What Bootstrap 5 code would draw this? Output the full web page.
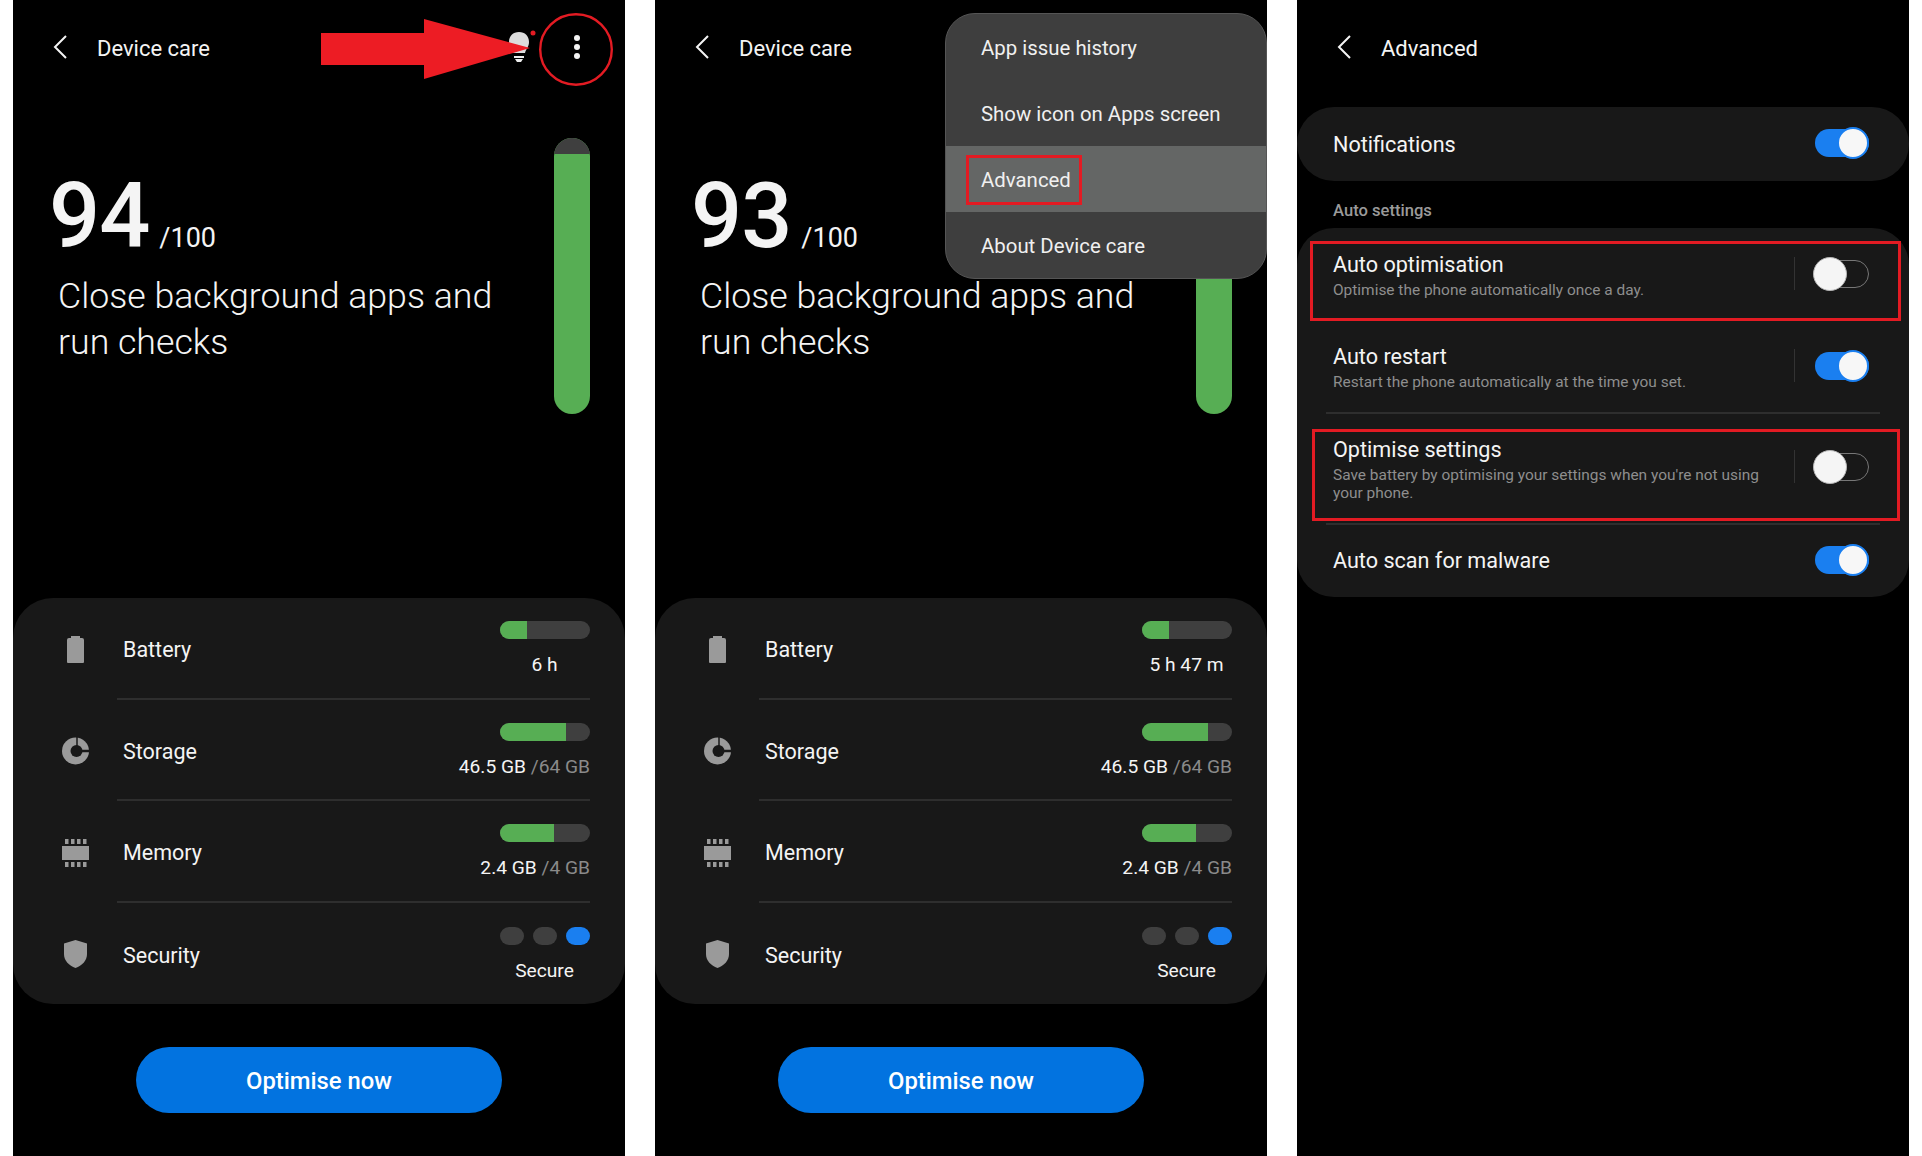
<!DOCTYPE html>
<html>
<head>
  <title>Device care</title>
  <link href="https://cdn.jsdelivr.net/npm/bootstrap@5.3.7/dist/css/bootstrap.min.css" rel="stylesheet" />
  <style>
    html, body { height: 1156px; overflow: hidden; }
    body { background: #fff; font-family: Roboto, "Liberation Sans", sans-serif; color: #f4f4f4; padding-left: 13px; }
    .phone { width: 612px; height: 1156px; background: #000; flex: none; }
    .next-phone { margin-left: 30px; }
    .top-bar { height: 94px; padding-left: 40px; }
    .top-title { font-size: 22px; margin-left: 30px; padding-top: 2px; }
    .bulb-icon { position: absolute; left: 495px; top: 29px; }
    .more-icon { position: absolute; left: 557px; top: 33px; }
    .hero { height: 504px; }
    .score { padding: 78px 0 0 36px; }
    .score-num { font-size: 90px; font-weight: 500; line-height: 90px; letter-spacing: -1px; }
    .score-max { font-size: 27px; margin-left: 10px; }
    .hero-text { font-size: 35.7px; font-weight: 300; line-height: 46px; margin: 11px 0 0 45px; max-width: 450px; }
    .level { width: 36px; height: 276px; margin: 44px 35px 0 0; background: #57ae54; border-radius: 18px; overflow: hidden; }
    .level-top { height: 16px; background: #3f3f3f; }
    .care-panel { height: 406px; background: #181818; border-radius: 40px; }
    .care-row { height: 25%; }
    .care-icon { width: 27px; margin: 2px 28px 0 49px; flex: none; }
    .care-body { padding-left: 6px; margin-right: 35px; border-bottom: 2px solid #2e2e2e; }
    .care-row:last-child .care-body { border-bottom: 0; }
    .care-label { font-size: 21.5px; padding-top: 5px; }
    .care-side { padding-top: 3px; }
    .care-val { font-size: 19.2px; line-height: 24px; margin-top: 14px; }
    .care-val span { color: #8a8a8a; }
    .care-val.centered { width: 91px; text-align: center; }
    .meter { width: 90px; height: 18px; background: #3f3f3f; border-radius: 9px; overflow: hidden; }
    .meter div { height: 100%; background: #57ae54; }
    .pip { width: 24px; height: 18px; background: #3f3f3f; border-radius: 9px; }
    .pip.on { background: #1a7ff0; }
    .pips { width: 90px; }
    .opt-btn { width: 366px; height: 66px; margin-top: 43px; padding-top: 9px; background: #0273e0; border: 0; color: #fff; font-size: 23.8px; font-weight: 500; }
    .opt-btn:hover { background: #0273e0; color: #fff; }
    .red-arrow { position: absolute; left: 308px; top: 19px; }
    .red-ring { position: absolute; left: 526px; top: 13px; width: 74px; height: 73px; }
    .red-box { position: absolute; border: 3px solid #e31b23; }
    .over-menu { position: absolute; left: 290px; top: 13px; width: 322px; background: #3e3e3e; border: 1px solid #555; border-radius: 30px; overflow: hidden; }
    .over-menu .list-group-item { background: transparent; border: 0; color: #f0f0f0; height: 66px; line-height: 68px; padding: 0 0 0 35px; font-size: 20.4px; }
    .over-menu .list-group-item.picked { background: #646665; }
    .set-card { background: #181818; border-radius: 37px; }
    .card-one { height: 74px; margin-top: 13px; padding: 0 40px 0 36px; }
    .card-one .set-title { padding-top: 2px; }
    .card-one .tgl { margin-bottom: 2px; }
    .set-title { font-size: 21.6px; line-height: 26px; }
    .sec-head { font-size: 16.6px; font-weight: 500; color: #9a9a9a; line-height: 20px; margin: 20px 0 7px 36px; }
    .set-row { padding: 24px 40px 21px 36px; }
    .set-row .v-sep, .set-row .tgl { margin-bottom: 4px; }
    .set-row.tall { padding-top: 23px; padding-bottom: 21px; }
    .set-row.tall .v-sep, .set-row.tall .tgl { margin-bottom: 6px; }
    .set-row.short { height: 72px; padding-top: 0; padding-bottom: 0; }
    .set-row.short .tgl { margin-bottom: 2px; }
    .set-sub { font-size: 15.45px; line-height: 18px; color: #8e8e8e; margin-top: 3px; padding-right: 20px; }
    .set-sep { height: 2px; margin: 0 29px; background: #2e2e2e; }
    .v-sep { width: 1px; height: 33px; background: #333; margin-right: 19px; flex: none; }
    .tgl { position: relative; display: block; width: 55px; height: 32px; flex: none; }
    .tgl::before { content: ""; position: absolute; left: 1px; right: 0; top: 2px; height: 28px; border-radius: 14px; background: #1a7ff0; }
    .tgl::after { content: ""; position: absolute; right: 0; top: 0; width: 32px; height: 32px; border-radius: 50%; background: #f7f7f7; border: 2px solid #1a7ff0; }
    .tgl.off::before { background: transparent; border: 1px solid #777; left: 5px; }
    .tgl.off::after { right: auto; left: -1px; top: -1px; width: 34px; height: 34px; background: #f5f5f5; border: 1px solid #b5b5b5; }
  </style>
</head>
<body class="d-flex">

  <div class="phone position-relative d-flex flex-column">
    <div class="top-bar d-flex align-items-center">
      <svg width="14" height="24" viewBox="0 0 14 24"><path d="M13 1 2 12l11 11" fill="none" stroke="#f4f4f4" stroke-width="2"/></svg>
      <div class="top-title">Device care</div>
    </div>
    <svg class="bulb-icon" width="30" height="36" viewBox="0 0 30 36"><path d="M1 13C1 7 5 3 11 3s10 4 10 10c0 5-3 7-4 11H5C4 20 1 18 1 13z" fill="#dcdcdc"/><rect x="6" y="27" width="10" height="2" fill="#eee"/><path d="M7 30h8l-2 3H9z" fill="#eee"/><circle cx="25" cy="4" r="2.500" fill="#e31b23"/></svg>
    <svg class="more-icon" width="14" height="28" viewBox="0 0 14 28"><circle cx="7" cy="5" r="3" fill="#f4f4f4"/><circle cx="7" cy="14" r="3" fill="#f4f4f4"/><circle cx="7" cy="23" r="3" fill="#f4f4f4"/></svg>
    <div class="hero d-flex justify-content-between">
      <div>
        <div class="score"><span class="score-num">94</span><span class="score-max">/100</span></div>
        <div class="hero-text">Close background apps and run checks</div>
      </div>
      <div class="level"><div class="level-top"></div></div>
    </div>
    <div class="care-panel" data-panel></div>
    <div class="text-center"><button class="btn rounded-pill opt-btn">Optimise now</button></div>
    <svg class="red-arrow" width="212" height="62" viewBox="0 0 212 62"><path d="M0 14h103V0l106 29-106 31V46H0z" fill="#ed1c24"/></svg>
    <svg class="red-ring" viewBox="0 0 74 73" preserveAspectRatio="none"><ellipse cx="37" cy="36.500" rx="35.800" ry="35.300" fill="none" stroke="#e31b23" stroke-width="2.400"/></svg>
  </div>

  <div class="phone next-phone position-relative d-flex flex-column">
    <div class="top-bar d-flex align-items-center">
      <svg width="14" height="24" viewBox="0 0 14 24"><path d="M13 1 2 12l11 11" fill="none" stroke="#f4f4f4" stroke-width="2"/></svg>
      <div class="top-title">Device care</div>
    </div>
    <div class="hero d-flex justify-content-between">
      <div>
        <div class="score"><span class="score-num">93</span><span class="score-max">/100</span></div>
        <div class="hero-text">Close background apps and run checks</div>
      </div>
      <div class="level"><div class="level-top"></div></div>
    </div>
    <div class="care-panel" data-panel></div>
    <div class="text-center"><button class="btn rounded-pill opt-btn">Optimise now</button></div>
    <div class="list-group over-menu">
      <div class="list-group-item">App issue history</div>
      <div class="list-group-item">Show icon on Apps screen</div>
      <div class="list-group-item picked">Advanced</div>
      <div class="list-group-item">About Device care</div>
    </div>
    <div class="red-box" style="left:311px;top:155px;width:116px;height:50px"></div>
  </div>

  <div class="phone next-phone position-relative d-flex flex-column">
    <div class="top-bar d-flex align-items-center">
      <svg width="14" height="24" viewBox="0 0 14 24"><path d="M13 1 2 12l11 11" fill="none" stroke="#f4f4f4" stroke-width="2"/></svg>
      <div class="top-title">Advanced</div>
    </div>
    <div class="set-card card-one d-flex align-items-center justify-content-between">
      <div class="set-title">Notifications</div>
      <span class="tgl"></span>
    </div>
    <div class="sec-head">Auto settings</div>
    <div class="set-card">
      <div class="set-row d-flex align-items-center">
        <div class="flex-grow-1">
          <div class="set-title">Auto optimisation</div>
          <div class="set-sub">Optimise the phone automatically once a day.</div>
        </div>
        <div class="v-sep"></div><span class="tgl off"></span>
      </div>
      <div class="set-row d-flex align-items-center">
        <div class="flex-grow-1">
          <div class="set-title">Auto restart</div>
          <div class="set-sub">Restart the phone automatically at the time you set.</div>
        </div>
        <div class="v-sep"></div><span class="tgl"></span>
      </div>
      <div class="set-sep"></div>
      <div class="set-row tall d-flex align-items-center">
        <div class="flex-grow-1">
          <div class="set-title">Optimise settings</div>
          <div class="set-sub">Save battery by optimising your settings when you're not using your phone.</div>
        </div>
        <div class="v-sep"></div><span class="tgl off"></span>
      </div>
      <div class="set-sep"></div>
      <div class="set-row short d-flex align-items-center justify-content-between">
        <div class="set-title">Auto scan for malware</div>
        <span class="tgl"></span>
      </div>
    </div>
    <div class="red-box" style="left:13px;top:241px;width:591px;height:80px"></div>
    <div class="red-box" style="left:15px;top:429px;width:588px;height:92px"></div>
  </div>

  <script>
    const grey = '#9a9a9a', dark = '#181818';
    const icons = {
      battery: `<svg width="27" height="28" viewBox="0 0 27 28"><path d="M9 0h9v2h2a2 2 0 0 1 2 2v22a1 1 0 0 1-1 1H6a1 1 0 0 1-1-1V4a2 2 0 0 1 2-2h2z" fill="${grey}"/></svg>`,
      storage: `<svg width="27" height="28" viewBox="0 0 27 28"><circle cx="13.5" cy="14" r="13.5" fill="${grey}"/><circle cx="14.5" cy="14" r="6" fill="${dark}"/><path d="M15 0v9" stroke="${dark}" stroke-width="1.5"/><path d="M15 14h13" stroke="${dark}" stroke-width="2.5"/></svg>`,
      memory: `<svg width="27" height="28" viewBox="0 0 27 28"><rect y="7" width="27" height="14" fill="${grey}"/><g fill="${grey}"><rect x="3" y="0" width="3.5" height="5"/><rect x="9" y="0" width="3.5" height="5"/><rect x="15" y="0" width="3.5" height="5"/><rect x="21" y="0" width="3.5" height="5"/><rect x="3" y="23" width="3.5" height="5"/><rect x="9" y="23" width="3.5" height="5"/><rect x="15" y="23" width="3.5" height="5"/><rect x="21" y="23" width="3.5" height="5"/></g></svg>`,
      shield: `<svg width="27" height="28" viewBox="0 0 27 28"><path d="M13.5 0 25 3.5V14c0 7-5 11.500-11.500 14C7 25.500 2 21 2 14V3.500z" fill="${grey}"/></svg>`
    };
    const rows = [
      { icon: 'battery', label: 'Battery', pct: 30, val: '6 h', center: true },
      { icon: 'storage', label: 'Storage', pct: 73, val: '46.5 GB <span>/64 GB</span>' },
      { icon: 'memory', label: 'Memory', pct: 60, val: '2.4 GB <span>/4 GB</span>' },
      { icon: 'shield', label: 'Security', pips: true, val: 'Secure', center: true }
    ];
    const batteryText = ['6 h', '5 h 47 m'];

    // 두 화면의 패널을 같은 데이터로 채움
    document.querySelectorAll('[data-panel]').forEach((panel, i) => {
      panel.innerHTML = rows.map(r => {
        const graph = r.pips
          ? '<div class="pips d-flex justify-content-between"><div class="pip"></div><div class="pip"></div><div class="pip on"></div></div>'
          : `<div class="meter"><div style="width:${r.pct}%"></div></div>`;
        const val = r.label === 'Battery' ? batteryText[i] : r.val;
        return `<div class="care-row d-flex align-items-stretch">
          <div class="care-icon d-flex align-items-center">${icons[r.icon]}</div>
          <div class="care-body flex-grow-1 d-flex align-items-center justify-content-between">
            <div class="care-label">${r.label}</div>
            <div class="care-side d-flex flex-column align-items-end">${graph}<div class="care-val${r.center ? ' centered' : ''}">${val}</div></div>
          </div>
        </div>`;
      }).join('');
    });
  </script>
  <script src="https://cdn.jsdelivr.net/npm/bootstrap@5.3.7/dist/js/bootstrap.bundle.min.js"></script>
</body>
</html>
